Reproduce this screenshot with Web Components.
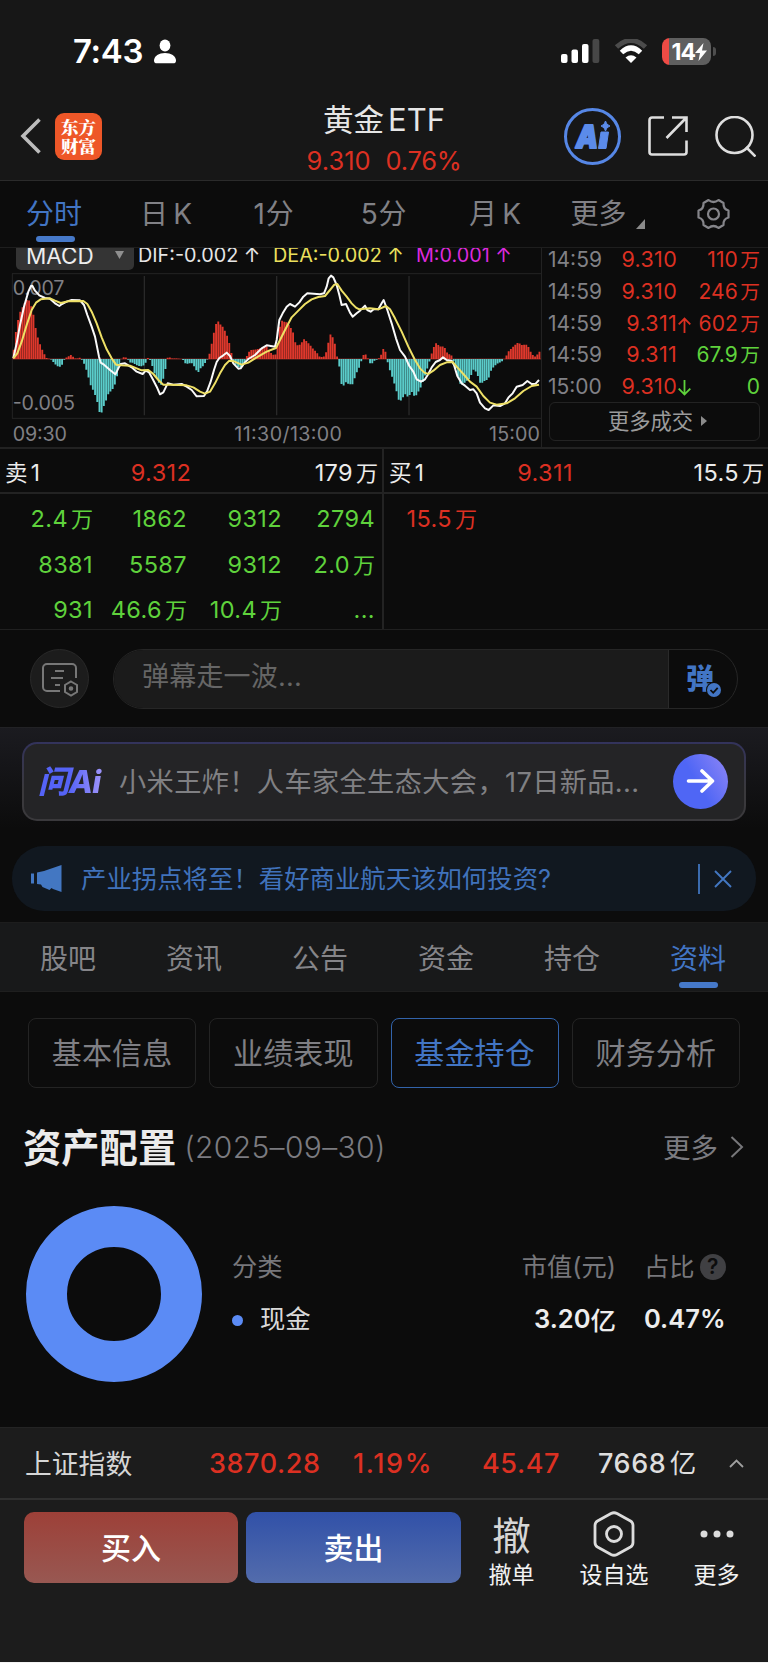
<!DOCTYPE html>
<html lang="zh-CN">
<head>
<meta charset="utf-8">
<meta name="viewport" content="width=device-width, initial-scale=1">
<title>黄金ETF</title>
<style>
  html, body {
    margin: 0;
    background: #0c0c0c;
  }
  body {
    width: 768px;
    font-family: Inter, "Noto Sans CJK SC", sans-serif;
    font-weight: 400;
    color: #e6e6e6;
    --red: #dc3022;
    --green: #5fd23c;
    --blue: #4275c4;
    --muted: #818186;
    --cjk-weight: 400;
  }
</style>
</head>
<body>
<stock-app></stock-app>

<script>
class BaseElement extends HTMLElement {
  connectedCallback() {
    if (this.shadowRoot) return;
    const template = document.createElement("template");
    template.innerHTML = `<style>
      * { box-sizing: border-box; }
      svg { display: block; flex: none; }
      .u { margin-left: .13em; font-size: .94em; line-height: 1; letter-spacing: 0; }
      ${this.css()}
    </style>${this.html()}`;
    this.attachShadow({ mode: "open" }).appendChild(template.content.cloneNode(true));
  }
  css() { return ":host { display: block; }"; }
  html() { return "<slot></slot>"; }
}

/**
 * Puts a small gap between a number and the chinese unit after it
 * @param {String} text
 */
function unit(text) {
  return text.replace(/([\d.]+)([万亿])$/, "$1<span class='u'>$2</span>");
}

class StatusBar extends BaseElement {
  css() {
    return `
      :host { display: flex; align-items: flex-end; height: 66px; padding: 0 52px 0 73px; background: #171717; color: #fff; }
      .time { font-size: 33px; font-weight: 600; line-height: 34px; letter-spacing: -.3px; margin-bottom: -2px; }
      .person { margin: 0 auto 2px 11px; }
      .signal { margin: 0 14px 3px 0; }
      .wifi { margin: 0 14px 3px 0; }
      .battery { display: flex; align-items: center; height: 29px; }
      .level { display: flex; align-items: center; justify-content: flex-end; width: 49px; height: 27px; padding-right: 4px; border-radius: 8px; font-size: 23px; font-weight: 700; letter-spacing: -1px; background: linear-gradient(90deg, #ee4b45 7px, #5f5f5f 7px); }
      .nub { width: 3px; height: 9px; margin-left: 2px; border-radius: 0 4px 4px 0; background: #4e4e4e; }
    `;
  }
  html() {
    return `
      <span class="time">7:43</span>
      <svg class="person" width="22" height="25" viewBox="0 0 22 25" fill="#fff"><ellipse cx="11" cy="6.500" rx="5.400" ry="6"/><path d="M0 21.500C0 17 5 14 11 14s11 3 11 7.500c0 2-1 2.800-3 2.800H3c-2 0-3-.8-3-2.800z"/></svg>
      <svg class="signal" width="39" height="24" viewBox="0 0 39 24" fill="#fff"><rect y="15" width="6.500" height="9" rx="2"/><rect x="10.500" y="10.500" width="6.500" height="13.500" rx="2"/><rect x="21" y="5" width="6.500" height="19" rx="2"/><rect x="31.500" width="6.800" height="24" rx="2" fill="#474747"/></svg>
      <svg class="wifi" width="34" height="24" viewBox="0 0 34 24" fill="none"><path d="M2.500 8Q17-5 31.500 8" stroke="#4b4b4b" stroke-width="5"/><path d="M7.500 13.500Q17 4.500 26.500 13.500" stroke="#fff" stroke-width="5"/><path d="M11.500 18.500Q17 14 22.500 18.500L17 24z" fill="#fff"/></svg>
      <span class="battery"><span class="level">14<svg width="12" height="18" viewBox="0 0 12 18"><path d="M8.500 0L0 10h5L3.500 18 12 7.500H7z" fill="#fff"/></svg></span><span class="nub"></span></span>
    `;
  }
}

class NavBar extends BaseElement {
  css() {
    return `
      :host { display: grid; grid-template-columns: 1fr auto 1fr; align-items: center; height: 115px; padding: 26px 12px 0 20px; background: #171717; border-bottom: 1px solid #2b2b2b; }
      .left, .right { display: flex; align-items: center; }
      .right { justify-content: flex-end; gap: 27px; }
      .left, .right { height: 89px; padding-bottom: 1px; }
      .logo { display: grid; place-content: center; width: 47px; height: 47px; margin-left: 14px; border-radius: 9px; background: #ee5728; color: #fff; font: 900 17.500px/19px "Noto Serif CJK SC", "Noto Sans CJK SC", sans-serif; text-align: center; }
      .title { display: flex; flex-direction: column; align-items: center; height: 89px; padding: 8px 8px 0 0; }
      .name { font-size: 30.500px; line-height: 40px; font-weight: var(--cjk-weight); }
      .name i { font-style: normal; margin-left: 4px; font-size: 31px; }
      .price { display: flex; gap: 15px; margin-top: 1px; font-size: 25.500px; line-height: 40px; color: var(--red); }
      .price :last-child { letter-spacing: -.3px; }
      .ai { display: grid; place-content: center; width: 57px; height: 57px; border: 3px solid #5687e6; border-radius: 50%; color: #5b8bea; }
      .ai text { font: italic 900 31px Inter, sans-serif; stroke: currentColor; stroke-width: 2px; stroke-linejoin: round; }
    `;
  }
  html() {
    return `
      <div class="left">
        <svg width="21" height="36" viewBox="0 0 21 36" fill="none" stroke="#bcbcbc" stroke-width="3.600"><path d="M19.500 1.500L3 18l16.500 16.500"/></svg>
        <div class="logo">东方<br>财富</div>
      </div>
      <div class="title">
        <span class="name">黄金<i>ETF</i></span>
        <span class="price"><span>9.310</span><span>0.76%</span></span>
      </div>
      <div class="right">
        <span class="ai"><svg width="40" height="40" viewBox="0 0 40 40" fill="currentColor"><text x="3" y="31.500" textLength="22" lengthAdjust="spacingAndGlyphs">A</text><path d="M28 16h7.500l-2.500 16.500h-7.500zM32.500 5q.8 4 4.500 5-3.700 1-4.500 5-.8-4-4.500-5 3.700-1 4.500-5z" stroke="currentColor"/></svg></span>
        <svg width="40" height="40" viewBox="0 0 40 40" fill="none" stroke="#dedede" stroke-width="2.600"><path d="M16 1.500H4A2.500 2.500 0 0 0 1.500 4v32A2.500 2.500 0 0 0 4 38.500h32a2.500 2.500 0 0 0 2.500-2.500V24.500M24 1.500h14.500V16M38.500 1.500L18.500 22"/></svg>
        <svg width="41" height="41" viewBox="0 0 41 41" fill="none" stroke="#dedede" stroke-width="2.600"><circle cx="19.500" cy="19" r="18"/><path d="M31 31l9.500 9.500"/></svg>
      </div>
    `;
  }
}

class PeriodTabs extends BaseElement {
  css() {
    return `
      :host { display: flex; height: 67px; border-bottom: 1px solid #1e1e1e; color: var(--muted); font-size: 28px; font-weight: var(--cjk-weight); line-height: 66px; }
      span { display: flex; justify-content: center; white-space: nowrap; }
      .w { word-spacing: -2.500px; }
      .n { letter-spacing: .8px; }
      .on { color: var(--blue); position: relative; }
      .on::after { content: ""; position: absolute; left: 36px; bottom: 5px; width: 39px; height: 6px; border-radius: 3px; background: #4679c9; }
      .more { align-items: flex-end; }
      .more svg { margin: 0 0 18px 9px; }
      .gear { align-items: center; }
    `;
  }
  html() {
    return `
      <span class="on" style="width:108px">分时</span>
      <span class="w" style="width:116px">日 K</span>
      <span class="n" style="width:100px">1分</span>
      <span class="n" style="width:120px">5分</span>
      <span class="w" style="width:102px">月 K</span>
      <span class="more" style="width:123px">更多<svg width="9" height="10"><path d="M9 0v10H0z" fill="#8a8a8a"/></svg></span>
      <span class="gear" style="width:88px"><svg width="33" height="32" viewBox="-16.500 -16 33 32" fill="none" stroke="#85858a" stroke-width="2.200" stroke-linejoin="round"><circle r="5.500"/><path d="M-5-14Q0-10 5-14L10-11Q9.500-5 15-3.500V3.500Q9.500 5 10 11L5 14Q0 10-5 14L-10 11Q-9.500 5-15 3.500V-3.500Q-9.500-5-10-11z"/></svg></span>
    `;
  }
}

// x, y pairs on a grid of three units per pixel; the afternoon starts at 810
const AFTERNOON = 810;
const DIF_AM = [40,355,50,310,60,255,72,200,85,155,93,138,97,137,105,152,118,166,135,174,150,176,165,190,178,198,186,192,200,185,215,180,240,181,252,195,262,225,275,260,285,290,297,350,302,368,312,374,330,390,346,403,355,385,362,372,375,370,395,382,410,395,428,402,437,392,447,397,458,417,470,440,480,463,490,457,503,430,520,434,545,432,560,440,575,450,590,469,612,468,622,452,632,425,642,390,650,366,658,354,670,346,680,338,690,348,700,370,715,386,722,385,732,370,745,357,765,345,785,325,800,316];
const DIF_PM = [15,320,20,300,28,240,38,220,50,200,60,192,75,200,88,187,100,170,112,160,150,163,162,160,170,140,176,115,183,107,190,112,200,135,208,165,215,195,228,192,240,218,248,230,260,220,270,212,285,197,292,210,302,215,312,207,325,208,335,190,341,180,352,210,365,250,378,295,390,330,405,350,418,378,430,395,440,418,453,425,465,418,475,402,485,382,497,366,510,360,519,352,530,360,545,362,552,375,562,408,575,430,585,437,600,450,610,448,620,460,630,488,645,505,656,510,670,496,690,498,705,490,715,473,728,460,740,440,758,435,772,423,785,432,797,431,807,420];
const DEA_AM = [40,355,52,340,65,305,80,255,95,210,108,188,122,178,150,175,165,182,182,189,205,184,250,183,262,192,275,215,290,250,305,292,320,328,335,355,348,374,365,376,390,377,410,385,425,391,445,390,460,402,475,420,490,434,510,434,560,436,580,442,600,455,615,461,630,455,645,430,660,400,675,375,688,362,702,364,725,374,745,368,770,352,800,335];
const DEA_PM = [18,324,30,300,45,270,65,232,85,212,105,192,125,178,145,171,165,168,180,150,193,134,202,132,215,152,230,170,245,190,258,203,268,208,300,205,325,208,348,198,360,208,375,235,395,275,415,320,435,360,450,385,463,398,475,402,490,392,510,375,530,367,548,366,560,380,580,402,600,425,620,440,640,468,660,488,680,494,710,490,735,475,760,453,785,438,807,434];
// histogram heights, positive is up
const BAR_AM = [40,20,50,100,60,140,72,165,84,182,92,165,100,135,110,75,120,45,130,20,138,6,142,0,150,2,155,-3,165,-15,177,-25,185,-20,192,-3,200,5,213,12,222,4,228,0,240,4,248,-5,255,-20,263,-45,270,-75,280,-95,290,-120,297,-155,302,-170,310,-145,318,-125,325,-105,338,-90,348,-70,355,-30,362,-5,367,5,377,5,385,-3,390,-10,400,-12,412,-20,425,-22,435,-18,441,3,448,3,455,-15,463,-42,472,-60,481,-82,487,-70,495,-40,500,-5,505,10,512,2,540,1,550,-3,557,-15,575,-12,585,-25,593,-44,600,-30,612,-18,620,-3,625,2,632,30,638,62,645,95,652,117,660,105,668,97,678,78,685,60,692,30,698,0,705,-15,715,-25,728,-22,735,-8,741,10,750,27,765,28,780,32,800,38];
const BAR_PM = [5,15,12,12,20,15,25,60,30,100,36,115,42,112,50,110,58,100,68,85,78,40,90,43,103,60,115,48,130,30,140,20,150,5,165,8,172,35,180,75,188,65,195,45,202,3,207,-15,213,-70,218,-88,225,-68,235,-75,248,-76,258,-45,268,-25,275,-3,280,12,290,14,295,-3,303,-18,312,-6,325,0,332,10,343,38,350,5,355,-20,365,-50,375,-80,388,-130,395,-122,405,-105,415,-115,425,-98,435,-115,445,-98,455,-80,465,-50,475,-18,482,3,488,30,500,50,508,37,522,38,532,18,545,10,550,-3,558,-30,573,-82,585,-70,600,-58,610,-32,620,-40,632,-77,640,-68,655,-60,665,-30,680,-15,695,-8,705,2,715,22,730,38,745,50,755,42,772,43,782,22,793,5,803,15,812,26];

function joinSessions(am, pm) {
  const flat = am.concat(pm.map((v, i) => (i % 2 ? v : v + AFTERNOON)));
  const points = [];
  for (let i = 0; i < flat.length; i += 2) points.push([flat[i], flat[i + 1]]);
  return points;
}

class MacdChart extends BaseElement {
  css() {
    return `
      :host { display: block; width: 542px; height: 199px; overflow: hidden; border-right: 1px solid #222; }
      .legend { display: flex; height: 25px; padding-left: 16px; font-size: 19.800px; line-height: 24px; white-space: nowrap; }
      .legend > span { height: 22px; margin-top: -5px; }
      .legend .pick { display: flex; justify-content: space-between; width: 118px; height: 30px; margin-top: -8px; padding: 4px 10px 0 10px; border-radius: 5px; background: #343434; color: #ededed; font-size: 22.500px; }
      .pick svg { margin-top: 7px; }
      .dif { width: 135px; margin-left: 4px; }
      .dea { width: 143px; color: #ebe05c; }
      .m { color: #dc2adc; }
      text { font-size: 59px; fill: #808085; }
    `;
  }
  bars() {
    const points = joinSessions(BAR_AM, BAR_PM);
    let up = "", down = "", k = 0;
    for (let x = 41; x < 1622; x += 6.6) {
      while (k < points.length - 2 && points[k + 1][0] < x) k++;
      const [x0, h0] = points[k], [x1, h1] = points[k + 1];
      const h = h0 + (h1 - h0) * Math.min(1, Math.max(0, (x - x0) / (x1 - x0)));
      const bar = `M${x.toFixed(1)} 357v${(-h).toFixed(1)}`;
      if (h > 0) up += bar; else down += bar;
    }
    return `<path d="${up}" stroke="#df382c" stroke-width="5.600"/><path d="${down}" stroke="#5accca" stroke-width="5.600"/>`;
  }
  html() {
    return `
      <div class="legend">
        <span class="pick">MACD<svg width="9" height="8"><path d="M0 0h9L4.500 8z" fill="#8f8f8f"/></svg></span>
        <span class="dif">DIF:-0.002 ↑</span><span class="dea">DEA:-0.002 ↑</span><span class="m">M:0.001 ↑</span>
      </div>
      <svg width="541" height="174" viewBox="0 99 1623 522" fill="none">
        <path d="M36 101H1623M36 535H1623M37 101V535" stroke="#242424" stroke-width="3"/>
        <path d="M433 108V526M830 108V526M1227 108V526" stroke="#292929" stroke-width="4"/>
        <path d="M38 357H1623" stroke="#7a2722" stroke-width="3"/>
        ${this.bars()}
        <text x="38" y="166" textLength="155">0.007</text>
        <text x="38" y="509" textLength="187">-0.005</text>
        <text x="38" y="602" textLength="163">09:30</text>
        <text x="703" y="602" textLength="323">11:30/13:00</text>
        <text x="1467" y="602" textLength="153">15:00</text>
        <polyline points="${joinSessions(DIF_AM, DIF_PM).join(" ")}" stroke="#fafafa" stroke-width="6" stroke-linejoin="round"/>
        <polyline points="${joinSessions(DEA_AM, DEA_PM).join(" ")}" stroke="#eee066" stroke-width="6" stroke-linejoin="round"/>
      </svg>
    `;
  }
}

class TradeTicks extends BaseElement {
  css() {
    return `
      :host { display: block; width: 226px; padding: 0 8px 0 6px; font-size: 21px; line-height: 31.800px; overflow: hidden; }
      .rows { margin-top: -4px; }
      .row { display: grid; grid-template-columns: 58px 71px 15px 1fr; height: 31.800px; text-align: right; color: var(--red); white-space: nowrap; }
      .row > :first-child { color: var(--muted); text-align: left; }
      .row > :nth-child(2) { font-size: 21.500px; letter-spacing: .3px; }
      .row > .g { color: var(--green); }
      .row svg { margin: 9px 0 0 1px; }
      .more { display: flex; align-items: center; justify-content: center; gap: 8px; height: 39px; margin: -1px 0 0 1px; padding-left: 6px; border: 1px solid #232323; border-radius: 6px; color: #9b9b9b; font-size: 21.300px; }
    `;
  }
  row(time, price, arrow, volume, green) {
    const arrows = {
      up: `<svg width="13" height="16" viewBox="0 0 13 16" fill="none" stroke="#dc3022" stroke-width="1.800"><path d="M6.500 16V1.500M.7 7.300L6.500 1.500l5.800 5.800"/></svg>`,
      down: `<svg width="13" height="16" viewBox="0 0 13 16" fill="none" stroke="#5fd23c" stroke-width="1.800"><path d="M6.500 0v14.500M.7 8.700l5.800 5.800 5.800-5.800"/></svg>`
    };
    return `<div class="row"><span>${time}</span><span>${price}</span><span>${arrows[arrow] || ""}</span><span class="${green ? "g" : ""}">${unit(volume)}</span></div>`;
  }
  html() {
    return `
      <div class="rows">
        ${this.row("14:59", "9.310", "", "110万")}
        ${this.row("14:59", "9.310", "", "246万")}
        ${this.row("14:59", "9.311", "up", "602万")}
        ${this.row("14:59", "9.311", "", "67.9万", true)}
        ${this.row("15:00", "9.310", "down", "0", true)}
      </div>
      <div class="more">更多成交<svg width="6" height="10"><path d="M0 0l6 5-6 5z" fill="#8b8b8b"/></svg></div>
    `;
  }
}

/** One side of the order book: label, price and volume come as attributes, queue as a comma list */
class OrderSide extends BaseElement {
  css() {
    return `
      :host { display: block; width: 384px; font-size: 23.500px; letter-spacing: .4px; }
      .head { display: grid; grid-template-columns: 96px 120px 1fr; height: 45px; line-height: 48px; margin-right: -2px; padding: 0 6px 0 5px; border-bottom: 2px solid #232323; color: #ececec; }
      .head span:nth-child(2) { color: var(--red); text-align: center; }
      .head span:nth-child(3) { text-align: right; }
      .queue { display: grid; grid-template-columns: 93px 94px 95px 93px; grid-auto-rows: 45.500px; height: 134px; padding-top: 2px; text-align: right; line-height: 45.500px; color: var(--queue, var(--green)); }
      .word { word-spacing: -4px; font-size: 22.500px; }
      :host([divided]) { border-right: 2px solid #232323; }
    `;
  }
  html() {
    const queue = this.getAttribute("queue").split(",").map(q => `<span>${unit(q)}</span>`).join("");
    return `
      <div class="head"><span class="word">${this.getAttribute("label")}</span><span>${this.getAttribute("price")}</span><span>${unit(this.getAttribute("volume"))}</span></div>
      <div class="queue">${queue}</div>
    `;
  }
}

class DanmuBar extends BaseElement {
  css() {
    return `
      :host { display: flex; align-items: center; gap: 24px; height: 98px; padding: 0 30px 0 30px; border-top: 1px solid #202020; font-weight: var(--cjk-weight); }
      .setting { display: grid; place-content: center; width: 59px; height: 59px; border: 1px solid #292929; border-radius: 50%; background: #1c1c1c; }
      .input { display: flex; flex: 1; height: 60px; border: 1px solid #262626; border-radius: 30px; overflow: hidden; }
      .hint { flex: 1; padding-left: 28px; background: #1b1b1b; color: #666; font-size: 27px; line-height: 54px; letter-spacing: .2px; border-right: 1px solid #2a2a2a; }
      .send { position: relative; width: 68px; padding-left: 17px; color: #4275c4; font: 900 28px/54px "Noto Sans CJK SC", sans-serif; }
      .send svg { position: absolute; left: 37px; top: 32px; }
    `;
  }
  html() {
    return `
      <span class="setting"><svg width="38" height="36" viewBox="0 0 38 36" fill="none" stroke="#777" stroke-width="2"><path d="M19 30H6a4 4 0 0 1-4-4V7a4 4 0 0 1 4-4h25a4 4 0 0 1 4 4v10M14 10h9M10 17h12M14 24h5"/><path d="M30 20.500l6 3.500v7l-6 3.500-6-3.500v-7z"/><circle cx="30" cy="27.500" r="1.300" fill="#777"/></svg></span>
      <span class="input">
        <span class="hint">弹幕走一波...</span>
        <span class="send">弹<svg width="16" height="16" viewBox="0 0 16 16"><circle cx="8" cy="8" r="8" fill="#0d0d0d"/><circle cx="8" cy="8" r="7" fill="#4275c4"/><path d="M4.500 8l2.700 2.800 4.500-5" fill="none" stroke="#0d0d0d" stroke-width="1.800"/></svg></span>
      </span>
    `;
  }
}

class AskAi extends BaseElement {
  css() {
    return `
      :host { display: block; height: 119px; padding: 14px 22px 0; border-top: 1px solid #222225; background: linear-gradient(#1b1b20, #0c0c0c 85%); }
      .box { display: flex; align-items: center; height: 79px; padding: 0 16px 0 14px; border: 2px solid transparent; border-radius: 15px; background: linear-gradient(#242426, #242426) padding-box, linear-gradient(#33335c, #3a393c 60%) border-box; }
      .brand { width: 69px; margin: 0 12px 0 0; font-style: italic; font-size: 31.500px; font-weight: 800; letter-spacing: -.8px; line-height: 50px; background: linear-gradient(90deg, #5563f6 45%, #a99bfa); -webkit-background-clip: text; background-clip: text; color: transparent; white-space: nowrap; }
      .text { flex: 1; margin-top: -3px; color: #808083; font-size: 27.200px; font-weight: var(--cjk-weight); white-space: nowrap; letter-spacing: .38px; }
      .go { display: grid; place-content: center; width: 55px; height: 55px; margin-top: -1px; border-radius: 50%; background: linear-gradient(60deg, #4f66f5 45%, #9087f6); }
    `;
  }
  html() {
    return `<div class="box"><span class="brand">问Ai</span><span class="text"><slot></slot></span><span class="go"><svg width="29" height="24" viewBox="0 0 29 24" fill="none" stroke="#fff" stroke-width="3.600" stroke-linecap="round" stroke-linejoin="round"><path d="M2.500 12H26M16 2l10.500 10L16 22"/></svg></span></div>`;
  }
}

class NoticeBar extends BaseElement {
  css() {
    return `
      :host { display: flex; align-items: center; height: 65px; margin: 0 12px 11px; padding: 0 24px 0 19px; border-radius: 32px; background: #111820; color: #4072bb; }
      .text { flex: 1; margin: -3px 0 0 19px; font-size: 25.400px; font-weight: var(--cjk-weight); white-space: nowrap; }
      .bar { width: 2px; height: 30px; margin-right: 14px; background: #3b6bae; }
    `;
  }
  html() {
    return `
      <svg width="31" height="27" viewBox="0 0 31 27" fill="#4377c2"><path d="M0 8.500h3v10H0zM6 7.500L13 6 30.500 0v27L22 24l-1.500-1-2 2-7-3-1.500-2.500L6 19z"/></svg>
      <span class="text"><slot></slot></span>
      <span class="bar"></span>
      <svg width="18" height="18" viewBox="0 0 18 18" stroke="#4377c2" stroke-width="1.900"><path d="M1 1l16 16M17 1L1 17"/></svg>
    `;
  }
}

class SectionTabs extends BaseElement {
  css() {
    return `
      :host { display: grid; grid-template-columns: repeat(6, 126px); padding: 0 5px; height: 70px; background: #18191a; border-bottom: 1px solid #1f1f1f; border-top: 1px solid #1d1d1d; color: #858589; font-size: 28px; font-weight: var(--cjk-weight); line-height: 73px; text-align: center; }
      .on { position: relative; color: var(--blue); }
      .on::after { content: ""; position: absolute; left: 44px; top: 59px; width: 39px; height: 6px; border-radius: 3px; background: #4679c9; }
    `;
  }
  html() {
    const active = this.getAttribute("active");
    return this.getAttribute("tabs").split(",").map(t => `<span class="${t === active ? "on" : ""}">${t}</span>`).join("");
  }
}

class ChipGroup extends BaseElement {
  css() {
    return `
      :host { display: grid; grid-template-columns: repeat(4, 1fr); gap: 13px; padding: 26px 28px 0; color: #7f7f84; font-size: 30px; font-weight: var(--cjk-weight); letter-spacing: .2px; text-align: center; line-height: 69px; }
      span { height: 70px; border: 1px solid #242424; border-radius: 8px; }
      .on { color: var(--blue); border-color: #3263aa; }
    `;
  }
  html() {
    const active = this.getAttribute("active");
    return this.getAttribute("items").split(",").map(t => `<span class="${t === active ? "on" : ""}">${t}</span>`).join("");
  }
}

class AssetCard extends BaseElement {
  css() {
    return `
      :host { display: block; height: 339px; padding: 30px 24px 0; }
      header { display: flex; align-items: center; height: 60px; color: #7b7b80; }
      h2 { margin: 0 0 0 -1px; color: #ebebeb; font-size: 38.300px; font-weight: 700; line-height: 60px; }
      .date { margin: -3px 0 0 8px; font-size: 30px; font-weight: 350; letter-spacing: .35px; }
      .more { margin: -4px 12px 0 auto; font-size: 27.500px; font-weight: var(--cjk-weight); }
      header svg { margin-top: -2px; }
      .body { display: flex; margin-top: 28px; }
      .donut { width: 176px; height: 176px; margin-left: 2px; border: 41px solid #5b8bf5; border-radius: 50%; }
      .table { flex: 1; display: grid; grid-template-columns: 1fr 120px 109px; grid-template-rows: 52px 51px; align-items: center; margin: 33px 19px 0 30px; font-size: 25.300px; font-weight: var(--cjk-weight); color: #77777b; white-space: nowrap; }
      .table > * { display: flex; align-items: center; }
      .r { justify-content: flex-end; }
      .c { padding-left: 28px; }
      .name { color: #dadada; }
      .name::before { content: ""; width: 11px; height: 11px; margin: 8px 17px 0 0; border-radius: 50%; background: #5b8bf5; }
      .table .v { padding-top: 3px; color: #ededed; font-weight: 600; font-size: 25.500px; }
      .v b { font-weight: 500; }
      .q { display: grid; place-content: center; flex: none; width: 26px; height: 26px; margin: 3px 0 0 5px; border-radius: 50%; background: #404043; color: #0d0d0d; font-size: 21px; font-style: normal; font-weight: 600; line-height: 26px; }
    `;
  }
  html() {
    return `
      <header><h2>资产配置</h2><span class="date">(2025–09–30)</span><span class="more">更多</span><svg width="14" height="22" viewBox="0 0 14 22" fill="none" stroke="#77777a" stroke-width="2"><path d="M1.500 1l10.500 10-10.500 10"/></svg></header>
      <div class="body">
        <div class="donut"></div>
        <div class="table">
          <span>分类</span><span class="r">市值(元)</span><span class="c">占比<i class="q">?</i></span>
          <span class="name">现金</span><span class="r v">3.20<b>亿</b></span><span class="c v">0.47%</span>
        </div>
      </div>
    `;
  }
}

class IndexBar extends BaseElement {
  css() {
    return `
      :host { display: grid; grid-template-columns: 184px 144px 129px 116px 1fr auto; align-items: center; height: 73px; padding: 0 24px 0 25px; border-top: 1px solid #242424; border-bottom: 2px solid #303030; background: #1c1c1c; font-size: 27px; font-weight: 500; letter-spacing: .6px; color: var(--red); white-space: nowrap; }
      .name { color: #d6d6d6; font-weight: var(--cjk-weight); font-size: 26.800px; letter-spacing: 0; padding-bottom: 2px; }
      .pct { letter-spacing: 1.600px; }
      .amount { color: #dedede; }
      .amount .u { font-weight: 400; font-size: 26.500px; }
    `;
  }
  html() {
    return `<span class="name">上证指数</span><span>3870.28</span><span class="pct">1.19%</span><span>45.47</span><span class="amount">${unit("7668亿")}</span><svg width="15" height="9" viewBox="0 0 15 9" fill="none" stroke="#a0a0a0" stroke-width="1.800"><path d="M1 8l6.500-6.500L14 8"/></svg>`;
  }
}

class TradeBar extends BaseElement {
  css() {
    return `
      :host { display: flex; height: 163px; padding: 12px 0 0 24px; background: #1c1c1c; border-bottom: 1px solid #f4f4f4; }
      button { width: 214px; height: 71px; margin: 0 8px 0 0; padding: 0 0 4px; border: 0; border-radius: 10px; color: #fff; font: 500 30px Inter, "Noto Sans CJK SC", sans-serif; }
      .buy { background: linear-gradient(#9d4038, #985852); }
      .sell { width: 215px; margin: 0; background: linear-gradient(#3151a8, #536cac); }
      .act { display: flex; flex-direction: column; align-items: center; width: 101px; color: #f2f2f2; font-size: 23px; line-height: 30px; }
      .pic { display: grid; place-content: center; height: 47px; margin-bottom: 1px; color: #d6d6d6; font-size: 38.500px; font-weight: var(--cjk-weight); line-height: 40px; }
      .act svg { margin-top: -3px; }
    `;
  }
  html() {
    return `
      <button class="buy">买入</button><button class="sell">卖出</button>
      <div class="act"><span class="pic">撤</span>撤单</div>
      <div class="act" style="width:104px"><span class="pic"><svg width="44" height="46" viewBox="0 0 44 46" fill="none" stroke="#dcdcdc" stroke-width="2.800" stroke-linejoin="round"><path d="M19 2.500q3-1.500 6 0L38.500 10q2.500 1.500 2.500 4.500v17q0 3-2.500 4.500L25 43.500q-3 1.500-6 0L5.500 36Q3 34.500 3 31.500v-17Q3 11.500 5.500 10z"/><circle cx="22" cy="23" r="7.500"/></svg></span>设自选</div>
      <div class="act"><span class="pic"><svg width="34" height="8" fill="#dcdcdc"><circle cx="4" cy="4" r="3.500"/><circle cx="17" cy="4" r="3.500"/><circle cx="30" cy="4" r="3.500"/></svg></span>更多</div>
    `;
  }
}

class StockApp extends BaseElement {
  css() {
    return `
      :host { display: block; width: 768px; height: 1663px; overflow: hidden; }
      .quote { display: flex; height: 201px; border-bottom: 2px solid #222; }
      .book { display: flex; height: 180px; }
      .buys { --queue: #dc3022; }
    `;
  }
  html() {
    return `
      <status-bar></status-bar>
      <nav-bar></nav-bar>
      <period-tabs></period-tabs>
      <div class="quote"><macd-chart></macd-chart><trade-ticks></trade-ticks></div>
      <div class="book">
        <order-side divided label="卖 1" price="9.312" volume="179万" queue="2.4万,1862,9312,2794,8381,5587,9312,2.0万,931,46.6万,10.4万,..."></order-side>
        <order-side class="buys" label="买 1" price="9.311" volume="15.5万" queue="15.5万"></order-side>
      </div>
      <danmu-bar></danmu-bar>
      <ask-ai>小米王炸！人车家全生态大会，17日新品...</ask-ai>
      <notice-bar>产业拐点将至！看好商业航天该如何投资?</notice-bar>
      <section-tabs tabs="股吧,资讯,公告,资金,持仓,资料" active="资料"></section-tabs>
      <chip-group items="基本信息,业绩表现,基金持仓,财务分析" active="基金持仓"></chip-group>
      <asset-card></asset-card>
      <index-bar></index-bar>
      <trade-bar></trade-bar>
    `;
  }
}

customElements.define("status-bar", StatusBar);
customElements.define("nav-bar", NavBar);
customElements.define("period-tabs", PeriodTabs);
customElements.define("macd-chart", MacdChart);
customElements.define("trade-ticks", TradeTicks);
customElements.define("order-side", OrderSide);
customElements.define("danmu-bar", DanmuBar);
customElements.define("ask-ai", AskAi);
customElements.define("notice-bar", NoticeBar);
customElements.define("section-tabs", SectionTabs);
customElements.define("chip-group", ChipGroup);
customElements.define("asset-card", AssetCard);
customElements.define("index-bar", IndexBar);
customElements.define("trade-bar", TradeBar);
customElements.define("stock-app", StockApp);
</script>
</body>
</html>
